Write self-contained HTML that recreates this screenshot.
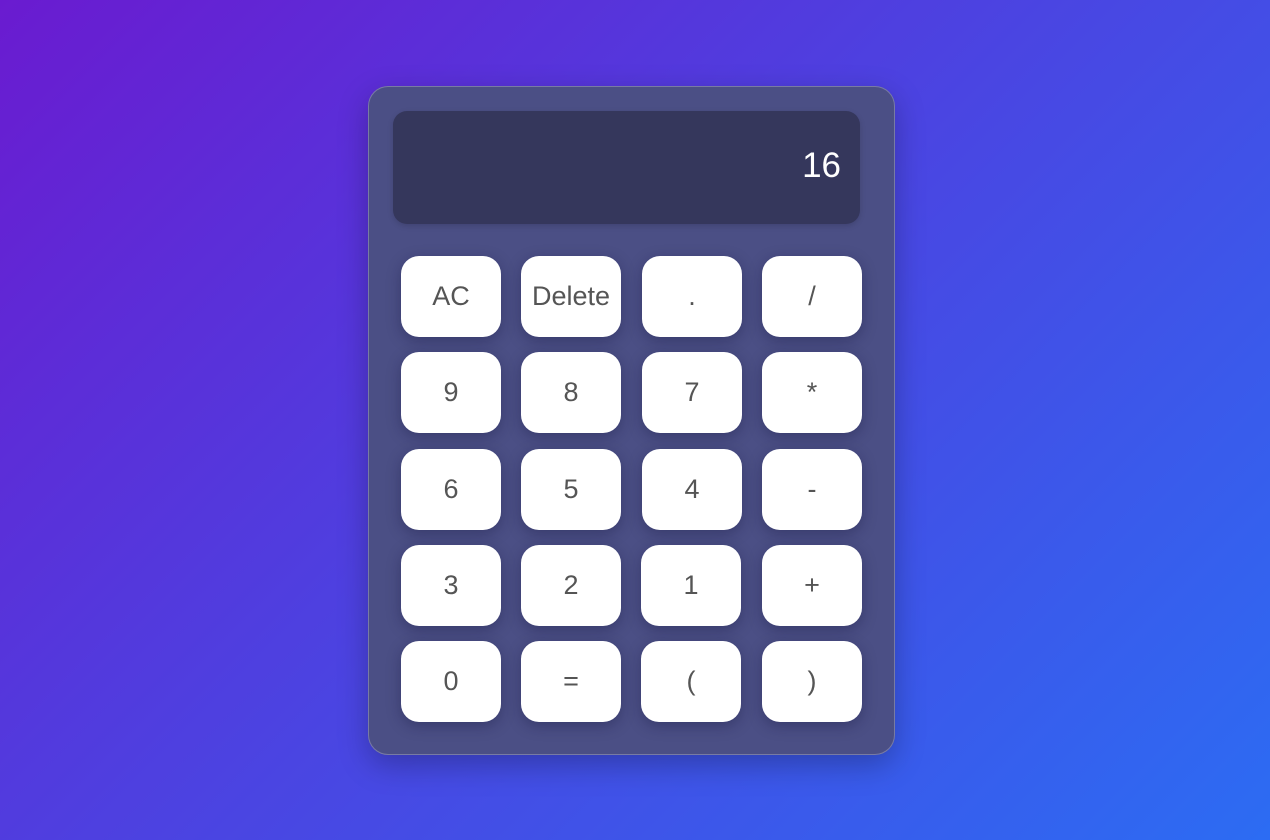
<!DOCTYPE html>
<html><head><style>
html,body{margin:0;padding:0;width:1270px;height:840px;overflow:hidden}
body{background:linear-gradient(135deg,#6a1bd0 0%,#4a45e2 50%,#2c6cf3 100%);font-family:"Liberation Sans",Arial,sans-serif;position:relative}
.calc{position:absolute;left:368px;top:86px;width:525px;height:667px;background:#4b4f85;border:1px solid rgba(255,255,255,0.25);border-radius:20px;box-shadow:0 10px 30px rgba(0,0,0,0.25)}
.disp{position:absolute;left:24px;top:24px;width:467px;height:113px;background:#35375c;border-radius:14px;box-sizing:border-box;color:#fff;font-size:35px;text-align:right;padding-right:19px;line-height:109px;box-shadow:0 2px 6px rgba(0,0,0,0.15)}
.b{position:absolute;width:100px;height:81px;background:#fff;border-radius:18px;color:#555;font-size:27px;text-align:center;line-height:81px;box-shadow:0 4px 14px rgba(20,20,60,0.35)}
</style></head><body>
<div class="calc">
<div class="disp">16</div>
</div>
<div class="b" style="left:401px;top:256px">AC</div>
<div class="b" style="left:521px;top:256px">Delete</div>
<div class="b" style="left:642px;top:256px">.</div>
<div class="b" style="left:762px;top:256px">/</div>
<div class="b" style="left:401px;top:352px">9</div>
<div class="b" style="left:521px;top:352px">8</div>
<div class="b" style="left:642px;top:352px">7</div>
<div class="b" style="left:762px;top:352px">*</div>
<div class="b" style="left:401px;top:449px">6</div>
<div class="b" style="left:521px;top:449px">5</div>
<div class="b" style="left:642px;top:449px">4</div>
<div class="b" style="left:762px;top:449px">-</div>
<div class="b" style="left:401px;top:545px">3</div>
<div class="b" style="left:521px;top:545px">2</div>
<div class="b" style="left:641px;top:545px">1</div>
<div class="b" style="left:762px;top:545px">+</div>
<div class="b" style="left:401px;top:641px">0</div>
<div class="b" style="left:521px;top:641px">=</div>
<div class="b" style="left:641px;top:641px">(</div>
<div class="b" style="left:762px;top:641px">)</div>
</body></html>
